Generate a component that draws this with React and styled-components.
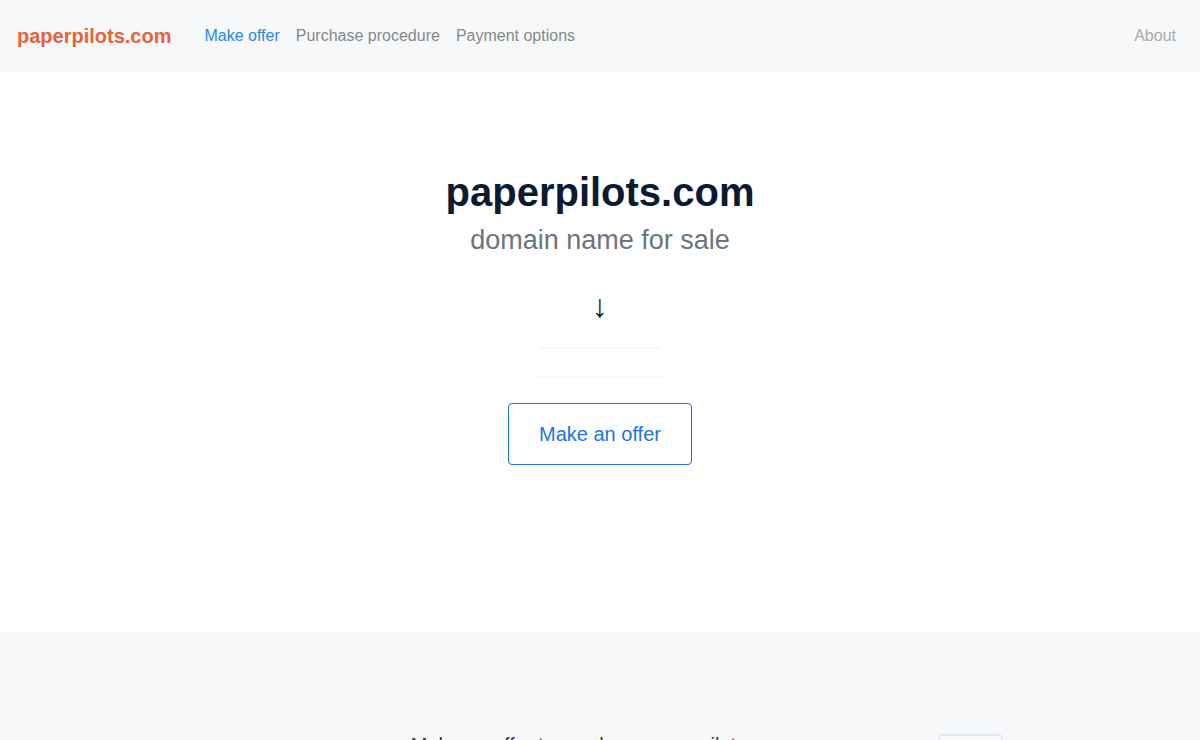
import React from 'react';
import styled, { createGlobalStyle } from 'styled-components';

const GlobalStyle = createGlobalStyle`
  body {
    margin: 0;
    font-family: "Liberation Sans", Arial, sans-serif;
    background: #ffffff;
  }
`;

const Header = styled.header`
  height: 72px;
  background-color: #f7f8fa;
  display: flex;
  align-items: center;
  padding: 0 24px 0 17px;
`;

const Logo = styled.a`
  font-size: 20px;
  font-weight: 700;
  color: #e8633b;
  margin-right: 33px;
  text-decoration: none;
`;

const Nav = styled.nav`
  display: flex;
  gap: 16px;
  flex: 1;
`;

const NavLink = styled.a`
  font-size: 16px;
  color: ${(p) => (p.$active ? '#2389e9' : '#888888')};
  text-decoration: none;
`;

const About = styled.a`
  font-size: 16px;
  color: #aaaaaa;
  text-decoration: none;
`;

const Hero = styled.section`
  height: 560px;
  display: flex;
  flex-direction: column;
  align-items: center;
  padding-top: 96px;
  box-sizing: border-box;
`;

const Title = styled.h1`
  margin: 0;
  font-size: 40px;
  line-height: 48px;
  font-weight: 700;
  color: #0b1a33;
`;

const Subtitle = styled.p`
  margin: 8px 0 0;
  font-size: 27px;
  line-height: 32px;
  color: #6c757d;
`;

const Arrow = styled.div`
  margin-top: 34px;
  font-family: "Liberation Sans", Arial, sans-serif;
  font-size: 32px;
  line-height: 32px;
  color: #0b1a33;
`;

const Ghost = styled.div`
  width: ${(p) => p.$w}px;
  height: 2px;
  background: #f7f8f9;
  margin-top: ${(p) => p.$top}px;
`;

const OfferButton = styled.button`
  margin-top: 25px;
  width: 184px;
  height: 62px;
  border: 1px solid #1a73e8;
  border-radius: 4px;
  background: #ffffff;
  color: #1a73e8;
  font-family: "Liberation Sans", Arial, sans-serif;
  font-size: 20px;
  cursor: pointer;
`;

const OfferSection = styled.section`
  background-color: #f7f8fa;
  padding-top: 101px;
  height: 300px;
  display: grid;
  grid-template-columns: 1fr auto 1fr;
  align-items: start;
`;

const OfferHeading = styled.h2`
  grid-column: 2;
  margin: 0;
  font-size: 20px;
  line-height: 24px;
  font-weight: 400;
  color: #333a40;
`;

const PriceBox = styled.div`
  grid-column: 3;
  margin: 2px 0 0 150px;
  width: 61px;
  height: 40px;
  border: 1px solid #d8e3ee;
  border-radius: 4px;
  background: #f8fafc;
  box-shadow: 0 -1px 3px rgba(150, 190, 230, 0.25);
`;

export default function App() {
  return (
    <>
      <GlobalStyle />
      <Header>
        <Logo href="#">paperpilots.com</Logo>
        <Nav>
          <NavLink $active href="#">Make offer</NavLink>
          <NavLink href="#">Purchase procedure</NavLink>
          <NavLink href="#">Payment options</NavLink>
        </Nav>
        <About href="#">About</About>
      </Header>
      <Hero>
        <Title>paperpilots.com</Title>
        <Subtitle>domain name for sale</Subtitle>
        <Arrow>↓</Arrow>
        <Ghost $w={120} $top={25} />
        <Ghost $w={128} $top={27} />
        <OfferButton>Make an offer</OfferButton>
      </Hero>
      <OfferSection>
        <OfferHeading>Make an offer to purchase paperpilots.com</OfferHeading>
        <PriceBox />
      </OfferSection>
    </>
  );
}
